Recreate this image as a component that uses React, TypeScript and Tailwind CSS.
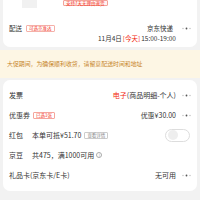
import React from "react";

const Dots = () => (
  <svg width="9" height="3" viewBox="0 0 9 3" className="shrink-0">
    <circle cx="1" cy="1.5" r="0.7" fill="#bbb" />
    <circle cx="4.5" cy="1.5" r="0.9" fill="#555" />
    <circle cx="8" cy="1.5" r="0.7" fill="#bbb" />
  </svg>
);

const Row = ({ children }: { children: React.ReactNode }) => (
  <div className="flex h-[20px] items-center px-[6px]">{children}</div>
);

export default function App() {
  return (
    <div
      className="w-[200px] h-[200px] overflow-hidden bg-[#f2f2f2] text-[#333]"
      style={{ fontFamily: '"Noto Sans CJK SC", "Noto Sans", sans-serif' }}
    >
      {/* top card */}
      <div className="mx-[3px] bg-white rounded-b-[7px] h-[47px] flex flex-col">
        <div className="flex h-[21px] items-start">
          <div className="ml-[19px] w-[15px] h-[8px] bg-[#f1f1f1]" />
          <div className="ml-[26px] h-[6px] px-[2px] flex items-center border-[0.5px] border-[#f3a39a] bg-[#fff3f1] text-[#f2270c] text-[4.5px] leading-none rounded-[1px]">
            支持7天无理由退货
          </div>
        </div>
        <div className="flex h-[14px] items-center pl-[6px] pr-[6px]">
          <span className="text-[6.5px] leading-none">配送</span>
          <span className="ml-[4px] h-[7px] px-[2px] flex items-center border-[0.5px] border-[#f5b0a8] text-[#f2270c] text-[4.5px] leading-none rounded-[1px]">
            可选京准达
          </span>
          <span className="ml-auto text-[6.5px] leading-none">京东快递</span>
          <span className="ml-[9px]">
            <Dots />
          </span>
        </div>
        <div className="flex h-[7px] items-center pl-[95px] text-[6.5px] leading-none">
          <span>11月4日</span>
          <span className="text-[#f2270c] ml-[1px]">[今天]</span>
          <span className="ml-[1px]">15:00-19:00</span>
        </div>
      </div>

      {/* notice */}
      <div className="mt-[3px] h-[28px] bg-[#fdf6e4] flex items-center pl-[7px] text-[5.9px] leading-none text-[#c7852a]">
        大促期间，为确保顺利收货，请留意配送时间和地址
      </div>

      {/* options card */}
      <div className="mt-[2px] mx-[3px] bg-white rounded-[7px] pt-[5px] pb-[6px] text-[7px] leading-none">
        <Row>
          <span>发票</span>
          <span className="ml-auto">
            <span className="text-[#f2270c]">电子</span>(商品明细-个人)
          </span>
          <span className="ml-[6px]">
            <Dots />
          </span>
        </Row>
        <Row>
          <span>优惠券</span>
          <span className="ml-[3px] h-[7px] px-[2px] flex items-center border-[0.5px] border-[#f5a59c] text-[#f2270c] text-[4.5px] leading-none rounded-[1px]">
            已选1张
          </span>
          <span className="ml-auto">优惠¥30.00</span>
          <span className="ml-[6px]">
            <Dots />
          </span>
        </Row>
        <Row>
          <span>红包</span>
          <span className="ml-[9px]">本单可抵¥51.70</span>
          <span className="ml-[3px] h-[7px] px-[2px] flex items-center border-[0.5px] border-[#ccc] text-[#888] text-[4.5px] leading-none rounded-[1px]">
            查看详情
          </span>
          <span className="ml-auto w-[25px] h-[13px] rounded-full border-[0.5px] border-[#ddd] bg-white flex items-center pl-[1.5px] mr-[1px]">
            <span className="w-[10px] h-[10px] rounded-full bg-[#eee]" />
          </span>
        </Row>
        <Row>
          <span>京豆</span>
          <span className="ml-[9px]">共475，满1000可用</span>
          <span className="ml-[2px] w-[6px] h-[6px] rounded-full border-[0.5px] border-[#aaa] text-[#aaa] text-[4px] flex items-center justify-center">
            i
          </span>
        </Row>
        <Row>
          <span>礼品卡(京东卡/E卡)</span>
          <span className="ml-auto">无可用</span>
          <span className="ml-[6px]">
            <Dots />
          </span>
        </Row>
      </div>
    </div>
  );
}
